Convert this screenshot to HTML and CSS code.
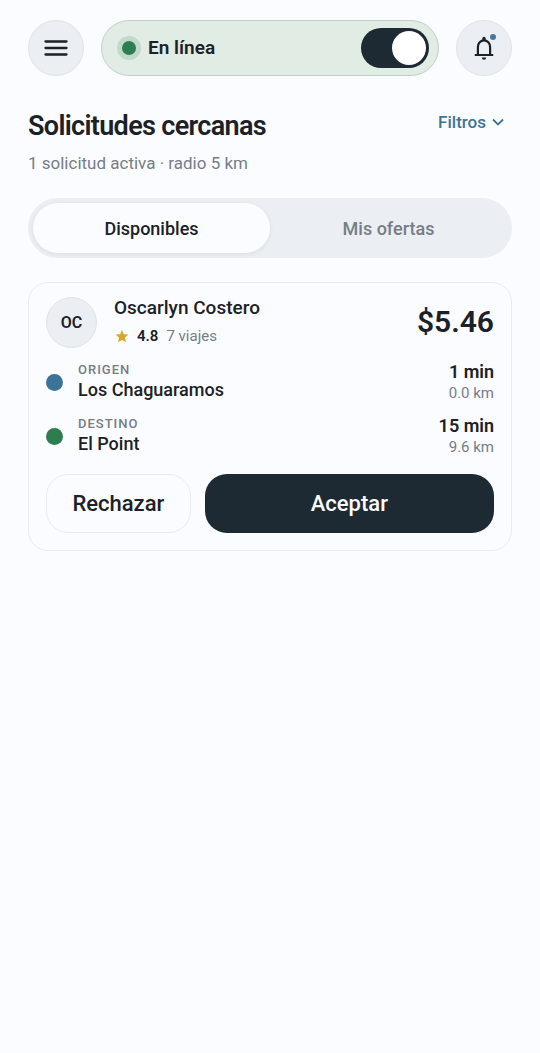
FILE: index.html
```html
<!DOCTYPE html>
<html lang="es">
<head>
<meta charset="utf-8">
<meta name="viewport" content="width=device-width, initial-scale=1">
<title>Solicitudes cercanas</title>
<link rel="stylesheet" href="styles.css">
</head>
<body>
<header class="topbar">
  <button class="round-btn" type="button" aria-label="Menú">
    <svg width="24" height="24" viewBox="0 0 24 24" fill="none" stroke="currentColor" stroke-width="2.3" stroke-linecap="round"><path d="M1.5 5.500h21M1.500 12h21M1.500 18.500h21"/></svg>
  </button>
  <label class="status" for="online">
    <span class="status-dot"></span>
    <span class="status-text">En línea</span>
    <input class="switch" id="online" type="checkbox" role="switch" checked>
  </label>
  <button class="round-btn" type="button" aria-label="Notificaciones">
    <svg width="28" height="28" viewBox="0 0 28 28" fill="none" stroke="currentColor" stroke-width="2.2"><path d="M4.800 21h18.400M7.900 21v-8a6.100 6.600 0 0 1 12.200 0v8"/><path d="M12.300 6.500V4.400a1.700 1.700 0 0 1 3.400 0v2.100z" fill="currentColor" stroke="none"/><path d="M11.800 23.500h4.400a2.200 2.200 0 0 1-4.400 0z" fill="currentColor" stroke="none"/></svg>
    <span class="badge"></span>
  </button>
</header>
<main class="content">
  <section class="heading">
    <div>
      <h1 class="title">Solicitudes cercanas</h1>
      <p class="subtitle">1 solicitud activa · radio 5 km</p>
    </div>
    <button class="filters" type="button">Filtros
      <svg width="12" height="12" viewBox="0 0 12 12" fill="none" stroke="currentColor" stroke-width="1.8"><path d="M1 3.500l5 5 5-5"/></svg>
    </button>
  </section>
  <div class="tabs" role="tablist">
    <button class="tab tab-active" type="button" role="tab" aria-selected="true">Disponibles</button>
    <button class="tab" type="button" role="tab" aria-selected="false">Mis ofertas</button>
  </div>
  <article class="card">
    <div class="rider">
      <span class="avatar">OC</span>
      <div class="rider-info">
        <h2 class="rider-name">Oscarlyn Costero</h2>
        <p class="rating">
          <svg width="14" height="14" viewBox="0 0 24 24" fill="#d4a92c"><path d="M12 1.500l3.200 7.300 7.800.8-5.900 5.300 1.700 7.900L12 18.700l-6.800 4.100 1.700-7.900L1 9.600l7.800-.8z"/></svg>
          <strong class="score">4.8</strong>
          <span>7 viajes</span>
        </p>
      </div>
      <span class="price">$5.46</span>
    </div>
    <div class="stops">
      <div class="stop">
        <span class="dot dot-origin"></span>
        <div class="place"><span class="place-label">ORIGEN</span><span class="place-name">Los Chaguaramos</span></div>
        <div class="leg"><span class="leg-time">1 min</span><span class="leg-distance">0.0 km</span></div>
      </div>
      <div class="stop">
        <span class="dot dot-destination"></span>
        <div class="place"><span class="place-label">DESTINO</span><span class="place-name">El Point</span></div>
        <div class="leg"><span class="leg-time">15 min</span><span class="leg-distance">9.6 km</span></div>
      </div>
    </div>
    <div class="actions">
      <button class="action reject" type="button">Rechazar</button>
      <button class="action accept" type="button">Aceptar</button>
    </div>
  </article>
</main>
</body>
</html>
```
FILE: styles.css
```css
:root {
  --ink: #1e2a33;
  --text: #1c2126;
  --muted: #757d86;
  --surface: #ebeef2;
  --line: #e9ebee;
  --blue: #3c7499;
  --green: #2e7d4f;
}

* { box-sizing: border-box; }

body {
  margin: 0;
  padding: 20px 28px;
  background: #fbfcff;
  color: var(--text);
  font-family: Roboto, "Liberation Sans", sans-serif;
}

button {
  margin: 0;
  padding: 0;
  border: 0;
  background: none;
  color: inherit;
  font: inherit;
  cursor: pointer;
}

h1, h2, p { margin: 0; }

svg { display: block; flex: none; }

.topbar { display: flex; gap: 17px; }

.round-btn {
  position: relative;
  display: flex;
  flex: none;
  align-items: center;
  justify-content: center;
  width: 56px;
  height: 56px;
  border: 1px solid #e1e4e7;
  border-radius: 50%;
  background: var(--surface);
}

.badge {
  position: absolute;
  top: 13px;
  right: 15px;
  width: 6px;
  height: 6px;
  border-radius: 50%;
  background: #4678a0;
}

.status {
  display: flex;
  flex: 1;
  align-items: center;
  gap: 12px;
  height: 56px;
  padding: 0 9px 0 20px;
  border: 1px solid #bfd0c6;
  border-radius: 28px;
  background: #e1ece5;
}

.status-dot {
  width: 14px;
  height: 14px;
  border-radius: 50%;
  background: var(--green);
  box-shadow: 0 0 0 5px #c0dacb;
}

.status-text {
  flex: 1;
  font-size: 19px;
  line-height: 24px;
  font-weight: 600;
}

.switch {
  display: flex;
  width: 68px;
  height: 40px;
  margin: 0;
  padding: 3px;
  border-radius: 20px;
  background: var(--ink);
  appearance: none;
  cursor: pointer;
}

.switch::before {
  width: 34px;
  height: 34px;
  border-radius: 50%;
  background: #fff;
  content: "";
}

.switch:checked { justify-content: flex-end; }

.heading {
  display: flex;
  justify-content: space-between;
  align-items: flex-start;
  margin-top: 34px;
}

.title {
  font-size: 27px;
  line-height: 32px;
  font-weight: 600;
  letter-spacing: -0.025em;
}

.subtitle {
  margin-top: 9px;
  color: var(--muted);
  font-size: 17px;
  line-height: 24px;
}

.filters {
  display: flex;
  align-items: center;
  gap: 6px;
  padding: 0 8px 0 0;
  color: var(--blue);
  font-size: 17px;
  line-height: 24px;
  font-weight: 500;
}

.tabs {
  display: grid;
  grid-template-columns: 1fr 1fr;
  margin-top: 23px;
  padding: 5px;
  border-radius: 30px;
  background: var(--surface);
}

.tab {
  height: 50px;
  border-radius: 25px;
  color: var(--muted);
  font-size: 18px;
  font-weight: 500;
}

.tab-active {
  background: #fbfcff;
  color: var(--text);
  box-shadow: 0 1px 5px #1e2a3314;
}

.card {
  margin-top: 24px;
  padding: 13px 17px 17px;
  border: 1px solid var(--line);
  border-radius: 20px;
}

.rider { display: flex; align-items: center; gap: 17px; }

.avatar {
  display: flex;
  flex: none;
  align-items: center;
  justify-content: center;
  width: 51px;
  height: 51px;
  border: 1px solid #e1e4e7;
  border-radius: 50%;
  background: var(--surface);
  font-size: 16px;
  font-weight: 600;
}

.rider-info { flex: 1; }

.rider-name {
  font-size: 19px;
  line-height: 24px;
  font-weight: 500;
}

.rating {
  display: flex;
  align-items: center;
  gap: 8px;
  margin-top: 4px;
  padding-left: 1px;
  color: var(--muted);
  font-size: 15px;
  line-height: 24px;
}

.score { color: var(--text); font-weight: 600; }

.price {
  font-size: 30px;
  line-height: 36px;
  font-weight: 600;
}

.stops {
  display: grid;
  gap: 10px;
  margin-top: 12px;
}

.stop { display: flex; align-items: center; gap: 15px; }

.dot {
  width: 17px;
  height: 17px;
  border-radius: 50%;
}

.dot-origin { background: var(--blue); }
.dot-destination { background: var(--green); }

.place, .leg { display: flex; flex-direction: column; }

.place { flex: 1; padding-bottom: 3px; }

.place-label {
  color: var(--muted);
  font-size: 13px;
  line-height: 19px;
  font-weight: 500;
  letter-spacing: 1px;
}

.place-name {
  font-size: 18px;
  line-height: 22px;
  font-weight: 500;
}

.leg { text-align: right; }

.leg-time {
  font-size: 18px;
  line-height: 22px;
  font-weight: 600;
}

.leg-distance {
  color: var(--muted);
  font-size: 15px;
  line-height: 20px;
}

.actions {
  display: grid;
  grid-template-columns: 1fr 2fr;
  gap: 14px;
  margin-top: 16px;
}

.action {
  height: 59px;
  border-radius: 22px;
  font-size: 22px;
  font-weight: 500;
}

.reject { border: 1px solid var(--line); }

.accept { background: var(--ink); color: #fbfcff; }
```
